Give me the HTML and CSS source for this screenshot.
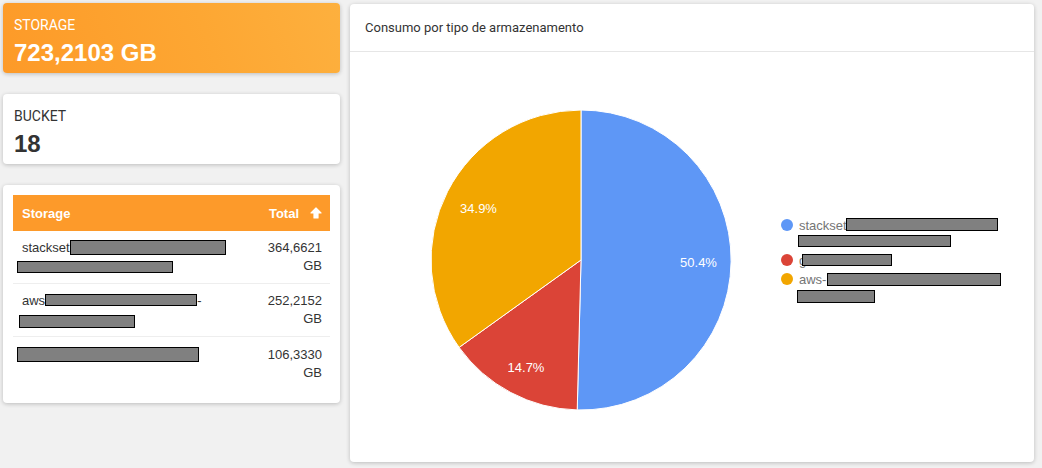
FILE: index.html
```html
<!DOCTYPE html>
<html lang="pt">
<head>
<meta charset="utf-8">
<title>Storage</title>
<link rel="stylesheet" href="styles.css">
</head>
<body>
<div class="page">
  <div class="left">
    <div class="card stat stat-orange">
      <div class="stat-label">STORAGE</div>
      <div class="stat-value">723,2103 GB</div>
    </div>
    <div class="card stat">
      <div class="stat-label">BUCKET</div>
      <div class="stat-value">18</div>
    </div>
    <div class="card table-card">
      <table class="tbl">
        <thead>
          <tr>
            <th class="th-name">Storage</th>
            <th class="th-total"><span class="th-total-in">Total
              <svg class="arrow" viewBox="0 0 12 12" width="12" height="12"><path d="M6 1 L11 6 L8 6 L8 11 L4 11 L4 6 L1 6 Z" fill="#fff" stroke="#fff" stroke-width="1.2" stroke-linejoin="round"/></svg></span></th>
          </tr>
        </thead>
        <tbody>
          <tr>
            <td class="td-name">stackset<span class="redact r1a"></span><br><span class="redact r1b"></span></td>
            <td class="td-total">364,6621 GB</td>
          </tr>
          <tr>
            <td class="td-name">aws<span class="redact r2a"></span>-<br><span class="redact r2b"></span></td>
            <td class="td-total">252,2152 GB</td>
          </tr>
          <tr>
            <td class="td-name"><span class="redact r3a"></span></td>
            <td class="td-total">106,3330 GB</td>
          </tr>
        </tbody>
      </table>
    </div>
  </div>
  <div class="card chart-card">
    <div class="chart-head">Consumo por tipo de armazenamento</div>
    <div class="chart-body">
      <svg class="chart" width="684" height="410" viewBox="0 0 684 410">
        <path d="M231,208 L231,58 A150,150 0 1,1 227.23,357.95 Z" fill="#5e97f6" stroke="#fff" stroke-width="1"/>
        <path d="M231,208 L227.23,357.95 A150,150 0 0,1 109.1,295.4 Z" fill="#db4437" stroke="#fff" stroke-width="1"/>
        <path d="M231,208 L109.1,295.4 A150,150 0 0,1 231,58 Z" fill="#f2a600" stroke="#fff" stroke-width="1"/>
        <g class="pie-label">
          <text x="348.5" y="214.5" text-anchor="middle">50.4%</text>
          <text x="176" y="319.5" text-anchor="middle">14.7%</text>
          <text x="128.5" y="160.5" text-anchor="middle">34.9%</text>
        </g>
        <g class="legend">
          <circle cx="437" cy="173" r="6" fill="#5e97f6"/>
          <text x="449" y="178">stackset-</text>
          <rect x="496.5" y="166.5" width="151" height="12" fill="#808080" stroke="#000" stroke-width="1"/>
          <rect x="448.5" y="183.5" width="152" height="11" fill="#808080" stroke="#000" stroke-width="1"/>
          <circle cx="437" cy="208" r="6" fill="#db4437"/>
          <text x="449" y="213">g</text>
          <rect x="452.5" y="202.5" width="89" height="11" fill="#808080" stroke="#000" stroke-width="1"/>
          <circle cx="437" cy="227" r="6" fill="#f2a600"/>
          <text x="449" y="232">aws-</text>
          <rect x="477.5" y="221.5" width="173" height="12" fill="#808080" stroke="#000" stroke-width="1"/>
          <rect x="447.5" y="238.5" width="77" height="12" fill="#808080" stroke="#000" stroke-width="1"/>
        </g>
      </svg>
    </div>
  </div>
</div>
</body>
</html>
```
FILE: styles.css
```css
html, body {
  margin: 0;
  padding: 0;
  background: #f1f1f1;
}
body {
  font-family: "Liberation Sans", Arial, sans-serif;
  color: #333;
}
.page {
  display: flex;
  gap: 10px;
  padding: 3px 8px 6px 3px;
}
.left {
  width: 337px;
  display: flex;
  flex-direction: column;
  gap: 21px;
  flex: none;
}
.card {
  background: #fff;
  border-radius: 4px;
  box-shadow: 0 1px 4px rgba(0, 0, 0, 0.22);
}
.stat {
  height: 70px;
  box-sizing: border-box;
  padding: 13px 11px 0 11px;
}
.stat-orange {
  background: linear-gradient(70deg, #fd9a28 0%, #fda733 60%, #fdb03e 100%);
  color: #fff;
}
.stat-label {
  font-family: Roboto, "Liberation Sans", sans-serif;
  font-size: 14px;
  line-height: 18px;
}
.stat-value {
  margin-top: 4px;
  font-family: "Liberation Sans", Arial, sans-serif;
  font-weight: bold;
  font-size: 24px;
  line-height: 30px;
}
.table-card {
  padding: 10px;
  height: 218px;
  box-sizing: border-box;
}
.tbl {
  width: 100%;
  border-collapse: collapse;
  font-size: 13px;
}
.tbl th {
  background: #fd9a2a;
  color: #fff;
  font-weight: bold;
  height: 36px;
  padding: 0 9px;
}
.th-name {
  text-align: left;
}
.th-total {
  text-align: right;
  padding-right: 8px !important;
}
.th-total-in {
  display: inline-flex;
  align-items: center;
  gap: 11px;
}
.arrow {
  display: block;
}
.tbl td {
  padding: 8px 9px;
  line-height: 18px;
  vertical-align: top;
  border-bottom: 1px solid #eeeeee;
  color: #333;
}
.tbl tbody tr:last-child td {
  border-bottom: none;
  padding-top: 9px;
}
.td-total {
  text-align: right;
  width: 56px;
  padding-right: 8px !important;
}
.redact {
  display: inline-block;
  background: #808080;
  border: 1px solid #000;
  box-sizing: border-box;
  vertical-align: middle;
}
.r1a { width: 156px; height: 15px; margin-top: -3px; }
.r1b { width: 156px; height: 12px; margin-left: -5px; }
.r2a { width: 152px; height: 12px; margin-top: -3px; }
.r2b { width: 116px; height: 13px; margin-left: -3px; margin-top: 3px; }
.r3a { width: 182px; height: 15px; margin-left: -5px; margin-top: -2px; }
.chart-card {
  flex: 1;
  margin-top: 1px;
  height: 458px;
  display: flex;
  flex-direction: column;
  overflow: hidden;
}
.chart-head {
  height: 47px;
  line-height: 47px;
  padding: 0 15px;
  font-family: Roboto, "Liberation Sans", sans-serif;
  font-size: 13px;
  color: #333;
  border-bottom: 1px solid #e6e6e6;
}
.chart-body {
  flex: 1;
}
.chart {
  display: block;
}
.pie-label text {
  fill: #fff;
  font-family: "Liberation Sans", Arial, sans-serif;
  font-size: 13px;
}
.legend text {
  fill: #757575;
  font-family: "Liberation Sans", Arial, sans-serif;
  font-size: 13px;
}
```
